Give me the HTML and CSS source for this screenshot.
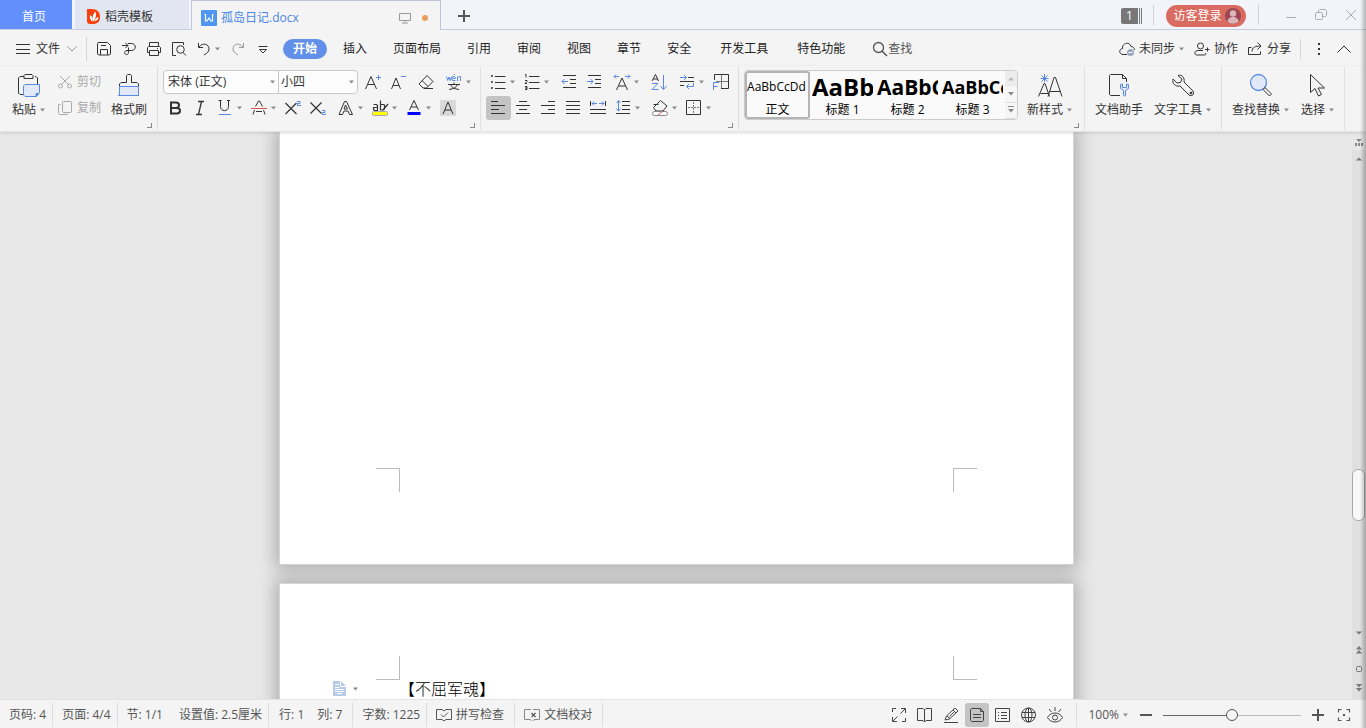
FILE: index.html
```html
<!DOCTYPE html>
<html lang="zh-CN">
<head>
<meta charset="utf-8">
<title>孤岛日记.docx</title>
<link rel="stylesheet" href="styles.css">
</head>
<body>
<svg class="defs" aria-hidden="true">
  <symbol id="down" viewBox="0 0 6 4"><path d="M0 .5h5L2.500 3.500z" fill="#8a8a8a" stroke="none"/></symbol>
</svg>

<header class="tabs">
  <button class="tab home">首页</button>
  <button class="tab store">
    <svg width="14" height="16" viewBox="0 0 14 16"><path d="M0 0h5c5 0 8 3 8 8s-3 7-7 7H3a3 3 0 0 1-3-3z" fill="#fa3f0c" stroke="none"/><path d="M5.500 13C3 11 2.500 8 3 6c2 1 3 3 2.500 7zM6.200 12.500C5 8 6 5 8.500 2.500 9.500 6 9 10 6.200 12.500zM7.500 12.500c1-3 2-4 4-4.500 0 2-1.500 4-4 4.500z" fill="#fff" stroke="none"/></svg>
    稻壳模板</button>
  <button class="tab file">
    <svg width="16" height="16" viewBox="0 0 16 16"><rect width="16" height="16" rx="1" fill="#4f96f1" stroke="none"/><path d="M3.500 4.500h1v6.500H6L8 8l2 3h1.500V4.500h1" stroke="#fff" stroke-width="1.200"/></svg>
    <span class="filename">孤岛日记.docx</span>
    <svg width="12" height="12" viewBox="0 0 12 12" class="muted"><path d="M.5 1.500h11v7H.5zM6 8.500v2M3 11h6"/></svg>
    <i class="dot"></i>
  </button>
  <button class="add" aria-label="新建"><svg width="12" height="12" viewBox="0 0 12 12"><path d="M6 0v12M0 6h12" stroke="#555" stroke-width="2"/></svg></button>
  <div class="window">
    <span class="count">1</span>
    <i class="vline"></i>
    <button class="login">访客登录
      <svg width="16" height="16" viewBox="0 0 16 16"><circle cx="8" cy="8" r="8" fill="#9c4753" stroke="none"/><circle cx="8" cy="5.500" r="3.200" fill="#dcb5b9" stroke="none"/><path d="M2.500 13.500c0-6 11-6 11 0-3 3-8 3-11 0z" fill="#dcb5b9" stroke="none"/></svg>
    </button>
    <i class="vline"></i>
    <button class="win" aria-label="最小化"><svg width="12" height="12" viewBox="0 0 12 12"><path d="M1 8.500h10"/></svg></button>
    <button class="win" aria-label="还原"><svg width="12" height="12" viewBox="0 0 12 12"><rect x=".5" y="3.500" width="7" height="7" rx="1"/><path d="M3.500 3.500v-2l1-1h6l1 1v5l-1 1h-3"/></svg></button>
    <button class="win" aria-label="关闭"><svg width="12" height="12" viewBox="0 0 12 12"><path d="M1 1l10 10M11 1L1 11"/></svg></button>
  </div>
</header>

<nav class="menu">
  <button class="filemenu">
    <svg width="14" height="10" viewBox="0 0 14 10"><path d="M0 .5h14M0 5.500h14M0 9.500h14"/></svg>文件
    <svg width="10" height="6" viewBox="0 0 10 6" class="muted"><path d="M.5.5L5 5 9.500.5"/></svg>
  </button>
  <i class="vline"></i>
  <div class="quick">
    <button aria-label="保存"><svg width="16" height="16" viewBox="0 0 16 16"><path d="M2 1.500h9.500l3 3V13l-1 1h-11l-1-1V2.500zM4.500 14V8.500h7V14M5 4.500h5"/></svg></button>
    <button aria-label="输出"><svg width="16" height="16" viewBox="0 0 16 16"><path d="M1 4.500h6M4.500 2l2.500 2.500L4.500 7M7 2.500h3.500c5 0 5 7 0 7H5M7.500 6.500v5c0 3-4 2.500-4 0 0-2 4-2 6-2"/></svg></button>
    <button aria-label="打印"><svg width="16" height="16" viewBox="0 0 16 16"><path d="M3.500 5V1.500h9V5M3.500 11.500h-2v-5l1-1h11l1 1v5h-2M3.500 9.500h9v5h-9zM11 7.500h1"/></svg></button>
    <button aria-label="预览"><svg width="16" height="16" viewBox="0 0 16 16"><path d="M5 14.500H1.500v-13h11V4M15 14.500l-3-3"/><circle cx="9.500" cy="8.500" r="3.800"/></svg></button>
    <button class="undo" aria-label="撤销"><svg width="16" height="16" viewBox="0 0 16 16"><path d="M2.500 2v4.500H7M3 6c4-5 10-3 10 2 0 3-2 4-5 6"/></svg><svg class="arr"><use href="#down"/></svg></button>
    <button class="muted" aria-label="恢复"><svg width="16" height="16" viewBox="0 0 16 16"><path d="M13.500 2v4.500H9M13 6C9 1 3 3 3 8c0 3 2 4 5 6"/></svg></button>
    <button aria-label="更多"><svg width="16" height="16" viewBox="0 0 16 16"><path d="M3.500 5.500h9M4.500 8.500l3.500 3.500 3.500-3.500z"/></svg></button>
  </div>
  <div class="menus">
    <button class="on">开始</button><button>插入</button><button>页面布局</button><button>引用</button><button>审阅</button><button>视图</button><button>章节</button><button>安全</button><button class="wide">开发工具</button><button class="wide">特色功能</button>
  </div>
  <button class="find"><svg width="16" height="16" viewBox="0 0 16 16"><circle cx="6.500" cy="6.500" r="5" stroke-width="1.300"/><path d="M10 10l5 5" stroke-width="1.500"/></svg>查找</button>
  <div class="share">
    <button><svg width="16" height="16" viewBox="0 0 16 16"><path d="M8 13.500H4C0 13.500-.5 8 3.500 7.500 3 1.500 11 .5 12 5.500c2 0 3.500 1.500 3.500 3.500"/><circle cx="11.500" cy="11.500" r="3.500" fill="#9aa7c0" stroke="none"/><path d="M9.500 11.500h4" stroke="#fff"/></svg>未同步<svg class="arr"><use href="#down"/></svg></button>
    <button><svg width="16" height="16" viewBox="0 0 16 16"><circle cx="6.500" cy="5" r="3"/><path d="M9 9.500H4.500c-5 0-4 4.500-2 4.500h8c1.500 0 1.500-1 1-2M11 8.500h4.500M13.500 6.500v4"/></svg>协作</button>
    <button><svg width="16" height="16" viewBox="0 0 16 16"><path d="M4.500 6.500h-3v7h12v-3M5 10.500c0-4 3-5.500 9-5.500M10.500 1.500L14 5l-3.500 3.500"/></svg>分享</button>
    <i class="vline"></i>
    <button class="more" aria-label="更多选项"><svg width="3" height="12" viewBox="0 0 3 12"><path d="M1 0v2M1 5v2M1 10v2" stroke-width="2"/></svg></button>
    <button aria-label="收起功能区"><svg width="14" height="8" viewBox="0 0 14 8"><path d="M.5 7.500L7 1l6.500 6.500"/></svg></button>
  </div>
</nav>

<section class="ribbon">
  <div class="group clip">
    <button class="big"><svg width="24" height="24" viewBox="0 0 24 24"><path d="M7 2.500H3L1.500 4v15L3 20.500h3M18 2.500h1l1.500 1.500v6M8 .5h7l1 1v3H7v-3z"/><path d="M8 10.500h14.500v8l-3 4H8l-1.500-1.500v-9z" fill="#e1e9f8" stroke="#5a8ae0"/><path d="M19 22.500v-3h3z" fill="#5a8ae0" stroke="#5a8ae0"/></svg><span>粘贴<svg class="arr"><use href="#down"/></svg></span></button>
    <div class="stack faded">
      <button><svg width="16" height="16" viewBox="0 0 16 16"><path d="M3 2l9 9M13 2L4 11"/><circle cx="3.500" cy="12" r="2"/><circle cx="12.500" cy="12" r="2"/></svg>剪切</button>
      <button><svg width="16" height="16" viewBox="0 0 16 16"><rect x="5.500" y="1.500" width="9" height="11" rx="1"/><path d="M3.500 4.500h-2v9l1 1h8v-1"/></svg>复制</button>
    </div>
    <button class="big"><svg width="24" height="24" viewBox="0 0 24 24"><path d="M2.500 12.500V10L4 8.500h5.500v-7l1-1h3l1 1v7H20l1.500 1.500v2.500"/><path d="M2.500 12.500h19v9h-19z" fill="#e1e9f8" stroke="none"/><path d="M2.500 12.500h19v9M2.500 12.500v9M1 21.500h21" stroke="#5a8ae0"/></svg><span>格式刷</span></button>
    <i class="launch"></i>
  </div>

  <div class="group font">
    <div class="row">
      <div class="combos">
        <label class="combo"><select aria-label="字体"><option>宋体 (正文)</option></select><svg class="arr"><use href="#down"/></svg></label>
        <label class="combo size"><select aria-label="字号"><option>小四</option></select><svg class="arr"><use href="#down"/></svg></label>
      </div>
      <button class="ib" aria-label="增大字号"><svg width="16" height="16" viewBox="0 0 16 16"><path d="M.5 15L6 2.500 11.500 15M2.500 10.500h7"/><path d="M11 3.500h5M13.500 1v5" stroke="#5a8ae0"/></svg></button>
      <button class="ib" aria-label="减小字号"><svg width="16" height="16" viewBox="0 0 16 16"><path d="M1.500 15l4.500-11 4.500 11M3 11.500h6"/><path d="M11 2.500h5" stroke="#5a8ae0"/></svg></button>
      <button class="ib gap" aria-label="清除格式"><svg width="16" height="16" viewBox="0 0 16 16"><path d="M9 1.500l6 6-6.500 6.500H5L1 10zM4 6.500l6 6M6 14.500h9"/></svg></button>
      <button class="ib dd gap" aria-label="拼音指南"><svg width="16" height="16" viewBox="0 0 16 16"><path d="M.5 2.500l1.200 4L3 3l1.300 3.500 1.200-4M6.500 4.500h3v-1l-1-1H7l-1 2v1.500l1 .5h2.500M8 1l1-1M11.500 7V2.500M11.500 4l1.500-1.500h1.500v4.500" stroke="#5a8ae0"/><path d="M2 10.500h12M8 8.500v2M4.500 10.500c1 3 4 4.500 8.500 5M11.500 10.500c-1 3-4 4.500-8.500 5"/></svg><svg class="arr"><use href="#down"/></svg></button>
    </div>
    <div class="row">
      <button class="ib" aria-label="加粗"><svg width="16" height="16" viewBox="0 0 16 16"><path d="M4 2.500h5c4 0 4 5.500 0 5.500H4zM4 8h6c4 0 4 5.500 0 5.500H4z" stroke-width="2"/></svg></button>
      <button class="ib" aria-label="倾斜"><svg width="16" height="16" viewBox="0 0 16 16"><path d="M6 1.500h6M4 14.500h6M9.500 1.500l-3 13" stroke-width="1.300"/></svg></button>
      <button class="ib dd" aria-label="下划线"><svg width="16" height="16" viewBox="0 0 16 16"><path d="M3.500.5v6c0 5.500 8 5.500 8 0v-6M1.500.5h3M10 .5h3"/><path d="M2 14.500h12" stroke="#5a8ae0"/></svg><svg class="arr"><use href="#down"/></svg></button>
      <button class="ib dd" aria-label="删除线"><svg width="16" height="16" viewBox="0 0 16 16"><path d="M4.500 6.500l3-5.500h1l3 5.500M3.500 10L2 14.500M12.500 10l1.500 4.500M5 11.500h6"/><path d="M0 8.500h16" stroke="#d9534b"/></svg><svg class="arr"><use href="#down"/></svg></button>
      <button class="ib" aria-label="上标"><svg width="16" height="16" viewBox="0 0 16 16"><path d="M.5 3l11 11M11.500 3l-11 11" stroke-width="1.200"/><path d="M12 1.500h3v2h-2.500v2H16" stroke="#5a8ae0"/></svg></button>
      <button class="ib" aria-label="下标"><svg width="16" height="16" viewBox="0 0 16 16"><path d="M.5 2.500l11 11M11.500 2.500l-11 11" stroke-width="1.200"/><path d="M12 10.500h3v2h-2.500v2H16" stroke="#5a8ae0"/></svg></button>
      <button class="ib dd gap" aria-label="文字效果"><svg width="16" height="16" viewBox="0 0 16 16"><path d="M1 14.500L6.500 1.500h2l6 13h-3L10 11H6l-1.500 3.500zM6 9l1.500-4L9.500 9z"/></svg><svg class="arr"><use href="#down"/></svg></button>
      <button class="ib dd" aria-label="突出显示"><svg width="16" height="16" viewBox="0 0 16 16"><rect x=".5" y="11.500" width="15" height="4" rx="1" fill="#ff0" stroke="#aaa"/><path d="M1.500 4.500h3l1 1v5h-3l-1-1v-2h4M8.500.5v9.500h3l1-1V5l-1-.5h-3M16 4l-5 6" stroke-width="1.200"/></svg><svg class="arr"><use href="#down"/></svg></button>
      <button class="ib dd" aria-label="字体颜色"><svg width="16" height="16" viewBox="0 0 16 16"><path d="M3.500 10L8 .5 12.500 10M5 7h6"/><path d="M1.500 13.500h13" stroke="#00f" stroke-width="3"/></svg><svg class="arr"><use href="#down"/></svg></button>
      <button class="ib" aria-label="字符底纹"><svg width="16" height="16" viewBox="0 0 16 16"><rect width="16" height="16" rx="1" fill="#d8d8d8" stroke="none"/><path d="M3 14L8 2l5 12M5 10h6"/></svg></button>
    </div>
    <i class="launch"></i>
  </div>

  <div class="group para">
    <div class="row">
      <button class="ib dd" aria-label="项目符号"><svg width="16" height="16" viewBox="0 0 16 16"><path d="M1.500 1.500h1v1h-1zM1.500 7.500h1v1h-1zM1.500 13.500h1v1h-1zM5 2.500h10.500M5 8.500h10.500M5 14.500h10.500"/></svg><svg class="arr"><use href="#down"/></svg></button>
      <button class="ib dd" aria-label="编号"><svg width="16" height="16" viewBox="0 0 16 16"><path d="M1 .5h1v3M1 6.500h2v1L1 9.500h2M1 12.500h2v3H1M1 14h2M5 2.500h10.500M5 8.500h10.500M5 14.500h10.500"/></svg><svg class="arr"><use href="#down"/></svg></button>
      <button class="ib gap" aria-label="减少缩进"><svg width="16" height="16" viewBox="0 0 16 16"><path d="M2 1.500h13M9 5.500h6M9 9.500h6M2 13.500h13"/><path d="M1 7.500h6M3.500 5L1 7.500 3.500 10" stroke="#5a8ae0"/></svg></button>
      <button class="ib" aria-label="增加缩进"><svg width="16" height="16" viewBox="0 0 16 16"><path d="M2 1.500h13M9 5.500h6M9 9.500h6M2 13.500h13"/><path d="M1 7.500h6M4.500 5L7 7.500 4.500 10" stroke="#5a8ae0"/></svg></button>
      <button class="ib dd gap" aria-label="字符缩放"><svg width="16" height="16" viewBox="0 0 16 16"><path d="M2.500 16L8 4l5.500 12M4.500 12h7"/><path d="M0 2.500h5M2 .5l-2 2 2 2M11 2.500h5M14 .5l2 2-2 2" stroke="#5a8ae0"/></svg><svg class="arr"><use href="#down"/></svg></button>
      <button class="ib gap" aria-label="排序"><svg width="16" height="16" viewBox="0 0 16 16"><path d="M1 7L4.500.5 7.500 7M2 5h5"/><path d="M1 9.500h6l-6 6h6.500M12.500 1v14M9.500 12l3 3.500 3-3.500" stroke="#5a8ae0"/></svg></button>
      <button class="ib dd gap" aria-label="制表位"><svg width="16" height="16" viewBox="0 0 16 16"><path d="M9 3.500h6M1 7.500h14M1 11.500h4"/><path d="M1 3.500h6M5 1l2.500 2.500L5 6M14.500 9v3.500H8M10 10l-2.500 2.500L10 15" stroke="#5a8ae0"/></svg><svg class="arr"><use href="#down"/></svg></button>
      <button class="ib" aria-label="表格"><svg width="16" height="16" viewBox="0 0 16 16"><path d="M1.500 6V.5h14v14H8"/><path d="M3 7.500h12M8.500 1v13" stroke="#777"/><path d="M.5 16V8.500H6M.5 12.500h4" stroke="#5a8ae0"/></svg></button>
    </div>
    <div class="row">
      <button class="ib active" aria-label="左对齐"><svg width="16" height="16" viewBox="0 0 16 16"><path d="M1 1.500h7M1 5.500h14M1 9.500h8M1 13.500h14"/></svg></button>
      <button class="ib" aria-label="居中"><svg width="16" height="16" viewBox="0 0 16 16"><path d="M4 1.500h8M1 5.500h14M4 9.500h8M1 13.500h14"/></svg></button>
      <button class="ib" aria-label="右对齐"><svg width="16" height="16" viewBox="0 0 16 16"><path d="M8 1.500h7M1 5.500h14M8 9.500h7M1 13.500h14"/></svg></button>
      <button class="ib" aria-label="两端对齐"><svg width="16" height="16" viewBox="0 0 16 16"><path d="M1 1.500h14M1 5.500h14M1 9.500h14M1 13.500h14"/></svg></button>
      <button class="ib" aria-label="分散对齐"><svg width="16" height="16" viewBox="0 0 16 16"><path d="M.5 1v5M15.500 1v5M0 9.500h16M0 13.500h16"/><path d="M2 3.500h5M4 1.500l-2 2 2 2M9 3.500h5M12 1.500l2 2-2 2" stroke="#5a8ae0"/></svg></button>
      <button class="ib dd" aria-label="行距"><svg width="16" height="16" viewBox="0 0 16 16"><path d="M7 1.500h8M7 5.500h8M7 9.500h8M1 13.500h14"/><path d="M3.500 1v10M1.500 3l2-2.500 2 2.500M1.500 8.500l2 2.500 2-2.500" stroke="#5a8ae0"/></svg><svg class="arr"><use href="#down"/></svg></button>
      <button class="ib dd gap" aria-label="底纹颜色"><svg width="16" height="16" viewBox="0 0 16 16"><path d="M8.500.5L15 6l-4 5H4L1.500 7.500z"/><path d="M1.500 4.500h5" /><rect x=".5" y="11.500" width="15" height="4" rx="2" fill="#fff" stroke="#888"/><path d="M6 15l5-4" stroke="#d9534b"/></svg><svg class="arr"><use href="#down"/></svg></button>
      <button class="ib dd" aria-label="边框"><svg width="16" height="16" viewBox="0 0 16 16"><path d="M.5.500h14v14H.5z"/><path d="M7.500 2v11M2 7.500h11" stroke="#777" stroke-dasharray="2 1"/></svg><svg class="arr"><use href="#down"/></svg></button>
    </div>
    <i class="launch"></i>
  </div>

  <div class="group styles">
    <div class="gallery">
      <button class="style chosen"><span class="p0">AaBbCcDd</span><span>正文</span></button>
      <button class="style"><span class="p1">AaBb</span><span>标题 1</span></button>
      <button class="style"><span class="p2">AaBbC</span><span>标题 2</span></button>
      <button class="style"><span class="p3">AaBbCc</span><span>标题 3</span></button>
      <div class="roll">
        <button aria-label="上"><svg width="6" height="4" viewBox="0 0 6 4"><path d="M0 3.500h6L3 0z" fill="#bbb" stroke="none"/></svg></button>
        <button aria-label="下"><svg width="6" height="4" viewBox="0 0 6 4"><path d="M0 0h6L3 3.500z" fill="#888" stroke="none"/></svg></button>
        <button aria-label="展开"><svg width="6" height="8" viewBox="0 0 6 8"><path d="M0 .5h6" stroke="#888"/><path d="M0 3h6L3 6.500z" fill="#888" stroke="none"/></svg></button>
      </div>
    </div>
    <button class="big"><svg width="26" height="24" viewBox="0 0 26 24"><path d="M1.500 22.500L7 9.500h1l4.500 13M3.500 19.500h8M11 22.500l6-19h1.500L25 22.500M13 17.500h10"/><path d="M7.500 0v8M3.500 4.500h8M4.500 1.500l6 6M10.500 1.500l-6 6" stroke="#5a8ae0"/></svg><span>新样式<svg class="arr"><use href="#down"/></svg></span></button>
    <i class="launch"></i>
  </div>

  <div class="group tools">
    <button class="big"><svg width="24" height="24" viewBox="0 0 24 24"><path d="M13 21.500H3.500l-1-1V1.500l1-1h12l4 4V8M15.500.5v4h4"/><path d="M13.500 10.500v4l3 2v5l1 .5 1-.5v-5l3-2v-4l-2-.5v3.500h-4V10z" fill="#e1e9f8" stroke="#5a8ae0"/></svg><span>文档助手</span></button>
    <button class="big"><svg width="24" height="24" viewBox="0 0 24 24"><path d="M7 1.500L11 5 9.500 8.500 6 9 2 5c-1 4 2 8 7 7l9 9c3 2 6-1 4-4l-9-9c1-4-2-8-6-6.500z"/><circle cx="20" cy="19" r="1" fill="#444"/></svg><span>文字工具<svg class="arr"><use href="#down"/></svg></span></button>
  </div>
  <div class="group tools">
    <button class="big"><svg width="24" height="24" viewBox="0 0 24 24"><circle cx="9.500" cy="8.500" r="8" fill="#e1e9f8" stroke="#5a8ae0" stroke-width="1.300"/><path d="M14 15.500l2-2 6.500 6.500-2 2z"/></svg><span>查找替换<svg class="arr"><use href="#down"/></svg></span></button>
    <button class="big"><svg width="24" height="24" viewBox="0 0 24 24"><path d="M4.500.5v18l4.500-4 3.500 7.500 3-1.500-3.500-6.500h6.500z"/></svg><span>选择<svg class="arr"><use href="#down"/></svg></span></button>
  </div>
</section>

<main class="work">
  <div class="canvas">
    <article class="page first">
      <div class="marks bottom"><i></i><i></i></div>
    </article>
    <article class="page second">
      <div class="marks top"><i></i><i></i></div>
      <div class="line">
        <button class="paraopt" aria-label="段落布局"><svg width="13" height="15" viewBox="0 0 13 15"><path d="M0 0h8l5 5v10H0z" fill="#b7cae6" stroke="none"/><path d="M7.500 0v5.500H13M2 3.500h4M2 6.500h4M2 8.500h9M2 10.500h9M4 12.500h5" stroke="#fff"/></svg><svg class="arr"><use href="#down"/></svg></button>
        <p>【不屈军魂】</p>
      </div>
    </article>
  </div>
  <aside class="scroll">
    <svg class="split" width="8" height="10" viewBox="0 0 8 10"><path d="M1 .5h6M1 2h6L4 5zM0 6h2v3H0zM3 6h2v3H3zM6 6h2v3H6z" fill="#888" stroke="none"/></svg>
    <div class="track">
      <svg width="6" height="4" viewBox="0 0 6 4"><path d="M0 3.500h6L3 .5z" fill="#777" stroke="none"/></svg>
      <div class="rail"><i class="thumb"></i></div>
      <svg width="6" height="4" viewBox="0 0 6 4"><path d="M0 .5h6L3 3.500z" fill="#777" stroke="none"/></svg>
    </div>
    <div class="jump">
      <svg width="6" height="8" viewBox="0 0 6 8"><path d="M0 3.500h6L3 0zM0 7.500h6L3 4z" fill="#777" stroke="none"/></svg>
      <svg width="6" height="6" viewBox="0 0 6 6"><rect x=".5" y=".5" width="5" height="5" rx="1" stroke="#777"/></svg>
      <svg width="6" height="8" viewBox="0 0 6 8"><path d="M0 0h6L3 3.500zM0 4h6L3 7.500z" fill="#777" stroke="none"/></svg>
    </div>
  </aside>
</main>

<footer class="status">
  <span class="cell">页码: 4</span>
  <span class="cell">页面: 4/4</span>
  <span class="cell"><span>节: 1/1</span><span>设置值: 2.5厘米</span></span>
  <span class="cell near"><span>行: 1</span><span>列: 7</span></span>
  <span class="cell">字数: 1225</span>
  <button class="cell check"><svg width="16" height="14" viewBox="0 0 16 14"><path d="M6 1.500H.5v10H6l2 1.500 2-1.500h5.500v-10H10L8 3 6 1.500M5 6.500l2.500 2.500L12 4.500"/></svg>拼写检查</button>
  <button class="cell check"><svg width="16" height="14" viewBox="0 0 16 14"><path d="M7 1.500H.5v10H6l1.500 1M9 1.500h6.500v10H11l-2 1" stroke="#888"/><path d="M7.500 5l4 4M11.500 5l-4 4" stroke-width="1.200"/></svg>文档校对</button>
  <div class="views">
    <button aria-label="全屏"><svg width="16" height="16" viewBox="0 0 16 16"><path d="M1.500 5V1.500H5M10 1.500h4.500V6M1.500 10v4.500H6M11 14.500h3.500V11M14 2L9.500 6.500M2 14l4.500-4.500"/></svg></button>
    <button aria-label="阅读"><svg width="16" height="16" viewBox="0 0 16 16"><path d="M7.500 3L6 1.500H.5v12H6L7.500 15 9 13.500h5.500v-12H9L7.500 3v12"/></svg></button>
    <button aria-label="写作"><svg width="16" height="16" viewBox="0 0 16 16"><path d="M2 13l1.500-4L12 1l3 3-8.500 8zM10 3l3 3M4 9l3 2.500M1 15.500h14M11.500 4.500l-5 5"/></svg></button>
    <button class="active" aria-label="页面"><svg width="16" height="16" viewBox="0 0 16 16"><path d="M2.500 1.500h9l3 3v9l-1 1h-11l-1-1v-11zM11.500 1.500v3h3M4 7.500h8M4 10.500h8"/></svg></button>
    <button aria-label="大纲"><svg width="16" height="16" viewBox="0 0 16 16"><path d="M.5 1.500h14v13H.5zM3 5.500h1M3 8.500h1M3 11.500h1M6 5.500h6M6 8.500h6M6 11.500h6"/></svg></button>
    <button aria-label="网页"><svg width="16" height="16" viewBox="0 0 16 16"><circle cx="7.500" cy="8" r="7"/><ellipse cx="7.500" cy="8" rx="3.500" ry="7"/><path d="M1 5.500h13M1 10.500h13M7.500 1v14"/></svg></button>
    <button aria-label="护眼"><svg width="16" height="16" viewBox="0 0 16 16"><path d="M.5 10.500c3-6 12-6 15 0-3 6-12 6-15 0zM8 0v4M2 2l2.500 3M14 2l-2.500 3"/><circle cx="8" cy="10.500" r="2.500"/></svg></button>
  </div>
  <button class="zoomval">100%<svg class="arr"><use href="#down"/></svg></button>
  <button class="step" aria-label="缩小"><svg width="12" height="12" viewBox="0 0 12 12"><path d="M0 6h12" stroke-width="2"/></svg></button>
  <input class="slider" type="range" aria-label="缩放" min="0" max="100" value="50">
  <button class="step" aria-label="放大"><svg width="12" height="12" viewBox="0 0 12 12"><path d="M0 6h12M6 0v12" stroke-width="2"/></svg></button>
  <button class="fit" aria-label="适合页面"><svg width="14" height="14" viewBox="0 0 14 14"><path d="M1.500 4.500v-3h3M9.500 1.500h3v3M1.500 9.500v3h3M9.500 12.500h3v-3" stroke-width="1.200"/><path d="M6 7h2" stroke-width="2"/></svg></button>
</footer>
<div class="edge"></div>
</body>
</html>
```
FILE: styles.css
```css
* { box-sizing: border-box; }
body {
  margin: 0;
  height: 100vh;
  display: flex;
  flex-direction: column;
  overflow: hidden;
  background: #f4f4f4;
  color: #333;
  font: 12px/18px "Open Sans", "Noto Sans CJK SC", sans-serif;
}
button {
  display: flex;
  align-items: center;
  justify-content: center;
  padding: 0;
  border: 0;
  background: none;
  color: inherit;
  font: inherit;
  white-space: nowrap;
}
svg { flex: none; fill: none; stroke: currentColor; overflow: visible; }
i { display: block; flex: none; }
.defs { position: absolute; width: 0; height: 0; }
.arr { width: 6px; height: 4px; }
.muted { color: #999; }
.vline { width: 1px; height: 24px; background: #d4d4d4; }

/* Tab strip */
.tabs { display: flex; flex: none; height: 30px; background: #f2f4f9; box-shadow: inset 0 -1px #c5cde2; }
.tab { height: 29px; padding-top: 4px; }
.home { width: 72px; padding-right: 4px; background: #628ffb; color: #fff; }
.store { width: 114px; margin: 0 2px 0 3px; padding-left: 12px; justify-content: flex-start; gap: 4px; background: #e2e6f0; }
.file { width: 250px; height: 30px; padding-left: 9px; justify-content: flex-start; gap: 4px; background: #f4f4f4; border: 1px solid #c0c4dc; border-bottom: 0; color: #4a86e8; }
.filename { width: 174px; text-align: left; }
.dot { width: 6px; height: 6px; margin-left: 7px; border-radius: 3px; background: #e8a05a; }
.add { width: 46px; height: 29px; padding-top: 3px; }
.window { display: flex; align-items: center; margin-left: auto; padding-right: 9px; height: 30px; }
.window .vline { height: 20px; background: #cfd1d6; }
.count { width: 21px; height: 16px; margin: 2px 11px 0 0; padding-right: 4px; line-height: 16px; text-align: center; color: #fff; background: linear-gradient(90deg, #777 17px, #f2f4f9 17px 18px, #777 18px 19px, #f2f4f9 19px 20px, #777 20px); border-radius: 2px 0 0 2px; }
.login { width: 80px; height: 22px; margin: 2px 12px 0; padding-left: 2px; gap: 3px; border-radius: 11px; background: #d96b60; color: #fff; }
.win { width: 12px; height: 12px; margin-left: 26px; color: #aaadb3; }
.win + .win { margin-left: 18px; }

/* Menu row */
.menu { display: flex; flex: none; align-items: center; height: 36px; padding: 2px 15px 0 16px; }
.filemenu { gap: 7px; margin-right: 9px; }
.filemenu svg:first-child { margin-right: -1px; }
.quick { display: flex; gap: 9px; margin-left: 9px; }
.undo { gap: 3px; }
.menus { display: flex; margin-left: 12px; }
.menus button { padding: 0 13px; height: 20px; color: #222; }
.menus .on { padding: 0 10px; margin-right: 3px; border-radius: 10px; background: #6090e8; color: #fff; font-weight: bold; }
.menus .wide { margin-left: 3px; }
.find { margin-left: 14px; color: #555; }
.share { display: flex; align-items: center; gap: 9px; margin-left: auto; }
.share button { gap: 4px; }
.share .vline { height: 20px; }
.share .more { width: 18px; }

/* Ribbon */
.ribbon { display: flex; flex: none; height: 66px; position: relative; z-index: 1; border-bottom: 1px solid #e4e4e4; box-shadow: 0 1px 3px #0002; }
.group { position: relative; flex: none; padding: 4px 5px 0; border-right: 1px solid #dfdfdf; border-image: linear-gradient(#f4f4f4 2px, #dfdfdf 2px 63px, #f4f4f4 63px) 1; }
.group.clip { display: flex; padding: 4px 6px 0 8px; }
.font { width: 323px; }
.para { width: 258px; }
.row { display: flex; height: 24px; margin-bottom: 2px; }
.big { flex-direction: column; justify-content: flex-start; height: 54px; padding: 4px 4px 0; color: #333; }
.big span { display: flex; align-items: center; gap: 4px; height: 24px; }
.stack { display: flex; flex-direction: column; gap: 2px; margin: 0 6px 0 7px; }
.stack button { height: 24px; gap: 4px; }
.faded { color: #aaa; }
.ib { flex: none; width: 25px; padding: 0 5px 0 4px; height: 24px; justify-content: flex-start; }
.dd { width: 34px; gap: 4px; padding-right: 4px; }
.gap { margin-left: 3px; }
.active { background: #c4c4c4; border-radius: 3px; }
.launch { position: absolute; right: 5px; bottom: 3px; width: 5px; height: 5px; border: solid #888; border-width: 0 1px 1px 0; }
.combos { display: flex; width: 195px; margin-right: 3px; border: 1px solid #c8c8c8; border-radius: 4px; background: #fcfcfc; }
.combo { display: flex; align-items: center; position: relative; width: 114px; }
.combo .arr { position: absolute; right: 2px; }
.combo select { width: 100%; height: 22px; padding: 0 4px; border: 0; background: none; appearance: none; color: #333; font: inherit; }
.size { flex: 1; border-left: 1px solid #c8c8c8; }
.size select { padding: 0 2px; }
.group.styles { display: flex; padding: 4px 7px 0 5px; }
.gallery { display: flex; height: 50px; margin-right: 5px; border: 1px solid #ccc; border-radius: 4px; background: #fafafa; overflow: hidden; }
.style { width: 65px; height: 48px; flex-direction: column; overflow: hidden; color: #000; }
.style span { flex: none; height: 18px; }
.style span:first-child { width: 61px; height: 30px; line-height: 32px; overflow: hidden; text-align: left; }
.chosen { box-shadow: inset 0 0 0 2px #b4b4b4; border-radius: 3px; }
.style .p1 { font-size: 24px; font-weight: bold; }
.style .p2 { font-size: 21px; font-weight: bold; }
.style .p3 { font-size: 18px; font-weight: bold; }
.roll { display: flex; flex-direction: column; width: 12px; background: #f6f6f6; }
.roll button { flex: 1; border-bottom: 1px solid #ddd; }
.roll button:first-child { background: #ececec; border: 0; }
.group.tools { display: flex; gap: 3px; padding: 4px 5px 0 6px; }

/* Document */
.work { display: flex; flex: 1; min-height: 0; background: #e8e8e8; }
.canvas { flex: 1; display: flex; flex-direction: column; align-items: center; gap: 18px; padding-left: 1px; overflow: hidden; }
.page { flex: none; width: 795px; padding: 0 96px; background: #fff; border: 1px solid #d6d6d6; box-shadow: 0 0 16px 4px #00000040; }
.first { height: 433px; padding-bottom: 72px; border-top: 0; display: flex; flex-direction: column; justify-content: flex-end; }
.second { height: 1123px; padding-top: 72px; }
.marks { display: flex; justify-content: space-between; }
.marks i { width: 24px; height: 24px; border: 0 solid #bbb; border-right-width: 1px; }
.marks i + i { border-width: 0 0 0 1px; }
.marks.bottom i { border-top-width: 1px; }
.marks.top i { border-bottom-width: 1px; }
.line { position: relative; padding-left: 23px; }
.line p { margin: 0; color: #000; font: 300 16px/16px "Noto Sans CJK SC", sans-serif; }
.paraopt { position: absolute; left: -43px; top: 1px; gap: 7px; }
.scroll { display: flex; flex-direction: column; align-items: center; width: 14px; padding-top: 5px; }
.split { flex: none; }
.track { display: flex; flex: 1; flex-direction: column; align-items: center; justify-content: space-between; width: 14px; margin-top: 3px; padding: 7px 0 0; background: #e0e0e0; }
.rail { flex: 1; width: 14px; padding-top: 308px; }
.thumb { width: 13px; height: 52px; border: 1px solid #a8a8a8; border-radius: 6px; background: #f8f8f8; }
.jump { display: flex; flex-direction: column; align-items: center; width: 14px; gap: 12px; padding: 11px 0 7px; background: #e0e0e0; }

/* Status bar */
.status { display: flex; flex: none; align-items: center; height: 29px; padding: 2px 15px 0 0; border-top: 1px solid #e2e2e2; color: #555; }
.cell { display: flex; align-items: center; flex: none; gap: 16px; height: 24px; padding: 0 6px 0 9px; border-right: 1px solid #dedede; }
.near { gap: 13px; padding: 0 10px; }
.check { gap: 4px; padding-right: 10px; }
.views { display: flex; gap: 2px; margin-left: auto; padding-right: 9px; border-right: 1px solid #dedede; color: #444; }
.views button { width: 24px; height: 24px; }
.zoomval { gap: 4px; margin: 0 11px; }
.slider { width: 138px; height: 14px; margin: 0 11px; appearance: none; background: linear-gradient(90deg, #666 50%, #bbb 50%) center / 100% 1px no-repeat; }
.slider::-webkit-slider-thumb { appearance: none; width: 12px; height: 12px; border: 1px solid #555; border-radius: 50%; background: #f4f4f4; }
.fit { margin-left: 13px; }
.edge { position: absolute; right: 0; top: 0; bottom: 0; z-index: 2; width: 6px; background: linear-gradient(90deg, #0000, #0004); pointer-events: none; }
```
